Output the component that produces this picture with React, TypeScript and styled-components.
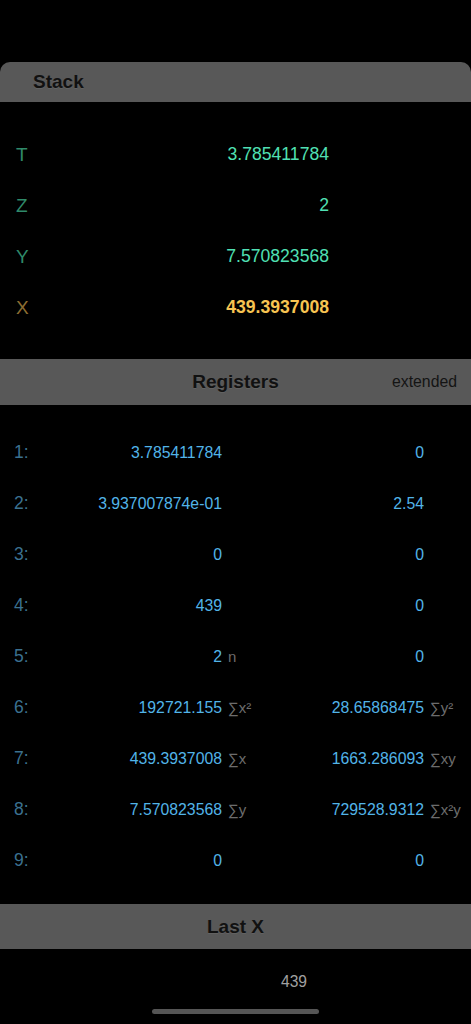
import React from "react";
import styled, { createGlobalStyle } from "styled-components";

const Global = createGlobalStyle`
  html, body { margin: 0; padding: 0; background: #000; }
  body { font-family: "Liberation Sans", Arial, Helvetica, sans-serif; }
`;

const Page = styled.div`
  position: relative;
  width: 471px;
  min-height: 1024px;
  background: #000;
  padding-top: 62px;
  box-sizing: border-box;
  overflow: hidden;
`;

const Header = styled.div<{ $h: number; $rounded?: boolean }>`
  height: ${(p) => p.$h}px;
  background: #585858;
  border-radius: ${(p) => (p.$rounded ? "10px 10px 0 0" : "0")};
  display: grid;
  grid-template-columns: 1fr auto 1fr;
  align-items: center;
  padding: 0 14px;
  box-sizing: border-box;
`;

const Title = styled.div<{ $left?: boolean }>`
  grid-column: ${(p) => (p.$left ? "1 / 2" : "2 / 3")};
  padding-left: ${(p) => (p.$left ? "19px" : "0")};
  font-size: 19px;
  font-weight: 700;
  color: #111;
  text-shadow: 0 1px 0 rgba(255, 255, 255, 0.08);
  white-space: nowrap;
`;

const Extra = styled.div`
  grid-column: 3 / 4;
  justify-self: end;
  font-size: 15.8px;
  color: #141414;
`;

const StackBody = styled.div`
  padding: 27px 0 26px 16px;
`;

const StackRow = styled.div`
  height: 51px;
  display: grid;
  grid-template-columns: 60px 253px;
  align-items: center;
`;

const StackLabel = styled.div<{ $x?: boolean }>`
  font-size: 19px;
  color: ${(p) => (p.$x ? "#8c6d32" : "#2f8a6a")};
`;

const StackValue = styled.div<{ $x?: boolean }>`
  text-align: right;
  font-size: 17.6px;
  font-weight: ${(p) => (p.$x ? 700 : 400)};
  color: ${(p) => (p.$x ? "#f7c452" : "#50e0b4")};
`;

const RegBody = styled.div`
  padding: 22px 0 18px 14px;
`;

const RegRow = styled.div`
  height: 51px;
  display: grid;
  grid-template-columns: 40px 168px 66px 136px auto;
  align-items: center;
`;

const RegLabel = styled.div`
  font-size: 17.5px;
  color: #3b7190;
`;

const RegValue = styled.div`
  text-align: right;
  font-size: 15.8px;
  color: #52b4e8;
`;

const Annot = styled.div`
  padding-left: 6px;
  font-size: 15px;
  color: #6c6c6c;
  white-space: nowrap;
`;

const LastBody = styled.div`
  height: 75px;
  display: grid;
  grid-template-columns: 307px;
  padding-top: 24px;
  box-sizing: border-box;
`;

const LastValue = styled.div`
  text-align: right;
  font-size: 15.6px;
  color: #a0a0a0;
`;

const HomeIndicator = styled.div`
  position: absolute;
  left: 152px;
  bottom: 10px;
  width: 167px;
  height: 5px;
  border-radius: 3px;
  background: #555;
`;

const stack = [
  { l: "T", v: "3.785411784" },
  { l: "Z", v: "2" },
  { l: "Y", v: "7.570823568" },
  { l: "X", v: "439.3937008", x: true },
];

const regs: { v1: string; a1?: React.ReactNode; v2: string; a2?: React.ReactNode }[] = [
  { v1: "3.785411784", v2: "0" },
  { v1: "3.937007874e-01", v2: "2.54" },
  { v1: "0", v2: "0" },
  { v1: "439", v2: "0" },
  { v1: "2", a1: "n", v2: "0" },
  { v1: "192721.155", a1: "∑x²", v2: "28.65868475", a2: "∑y²" },
  { v1: "439.3937008", a1: "∑x", v2: "1663.286093", a2: "∑xy" },
  { v1: "7.570823568", a1: "∑y", v2: "729528.9312", a2: "∑x²y" },
  { v1: "0", v2: "0" },
];

export default function App() {
  return (
    <Page>
      <Global />
      <Header $h={40} $rounded>
        <Title $left>Stack</Title>
      </Header>
      <StackBody>
        {stack.map((s) => (
          <StackRow key={s.l}>
            <StackLabel $x={s.x}>{s.l}</StackLabel>
            <StackValue $x={s.x}>{s.v}</StackValue>
          </StackRow>
        ))}
      </StackBody>
      <Header $h={46}>
        <Title>Registers</Title>
        <Extra>extended</Extra>
      </Header>
      <RegBody>
        {regs.map((r, i) => (
          <RegRow key={i}>
            <RegLabel>{i + 1}:</RegLabel>
            <RegValue>{r.v1}</RegValue>
            <Annot>{r.a1}</Annot>
            <RegValue>{r.v2}</RegValue>
            <Annot>{r.a2}</Annot>
          </RegRow>
        ))}
      </RegBody>
      <Header $h={45}>
        <Title>Last X</Title>
      </Header>
      <LastBody>
        <LastValue>439</LastValue>
      </LastBody>
      <HomeIndicator />
    </Page>
  );
}
